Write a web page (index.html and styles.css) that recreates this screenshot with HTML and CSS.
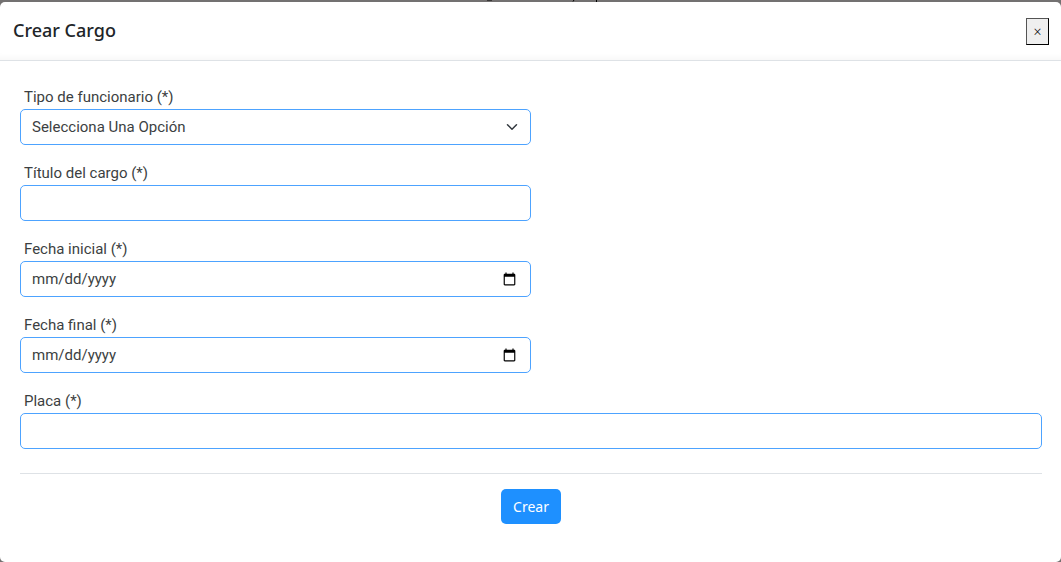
FILE: index.html
```html
<!DOCTYPE html>
<html lang="es">
<head>
  <meta charset="UTF-8" />
  <meta name="viewport" content="width=device-width, initial-scale=1.0"/>
  <title>Crear Cargo</title>
  <link rel="stylesheet" href="styles.css">
</head>
<body>

  <div class="backdrop">
    <svg class="backdrop-marks" width="130" height="2" viewBox="0 0 130 2" aria-hidden="true">
      <path d="M1 0h5M87 1.500l1-1.500M110.500 0v2" stroke="#000" fill="none"/>
    </svg>
  </div>

  <div class="modal" role="dialog" aria-labelledby="modalTitle">
    <div class="modal-header">
      <h5 class="modal-title" id="modalTitle">Crear Cargo</h5>
      <button type="button" class="btn-close" aria-label="Cerrar">×</button>
    </div>

    <form class="modal-body">
      <div class="form-grid">
        <div class="field">
          <label for="tipo">Tipo de funcionario (*)</label>
          <select id="tipo" class="form-control form-select">
            <option>Selecciona Una Opción</option>
          </select>
        </div>
        <div class="field">
          <label for="titulo">Título del cargo (*)</label>
          <input type="text" id="titulo" class="form-control">
        </div>
        <div class="field">
          <label for="fechaInicial">Fecha inicial (*)</label>
          <input type="date" id="fechaInicial" class="form-control">
        </div>
        <div class="field">
          <label for="fechaFinal">Fecha final (*)</label>
          <input type="date" id="fechaFinal" class="form-control">
        </div>
        <div class="field field-wide">
          <label for="placa">Placa (*)</label>
          <input type="text" id="placa" class="form-control">
        </div>
      </div>

      <div class="modal-actions">
        <button type="button" class="btn-primary">Crear</button>
      </div>
    </form>
  </div>

</body>
</html>
```

FILE: styles.css
```css
* {
  box-sizing: border-box;
}
body {
  margin: 0;
  min-height: 100vh;
  display: flex;
  flex-direction: column;
  background: #737171;
  color: #212529;
  font-family: Roboto, sans-serif;
  font-size: 15px;
  line-height: 24px;
}
.backdrop {
  height: 2px;
  display: flex;
  justify-content: center;
}
.backdrop-marks {
  margin-left: 40px;
}
.modal {
  flex: 1;
  background: #fff;
  border-radius: 5px;
}
.modal-header {
  display: flex;
  align-items: flex-start;
  justify-content: space-between;
  padding: 16px 12px 15px 13px;
  border-bottom: 1px solid #dee2e6;
  box-shadow: inset 0 -8px 8px -8px rgba(0, 0, 0, 0.06);
}
.modal-title {
  margin: 0;
  font-family: "Noto Sans", sans-serif;
  font-size: 18px;
  font-weight: 500;
}
.btn-close {
  width: 23px;
  height: 27px;
  padding: 0;
  border: 1px outset #000;
  background: #efefef;
  color: #000;
  font-family: "Noto Sans", sans-serif;
  font-size: 14px;
  font-weight: 300;
}
.modal-body {
  padding: 24px 19px 38px 20px;
}
.form-grid {
  display: grid;
  grid-template-columns: 1fr 1fr;
  row-gap: 16px;
  padding-bottom: 24px;
  border-bottom: 1px solid #dee2e6;
}
.field {
  grid-column: 1;
}
.field-wide {
  grid-column: 1 / -1;
}
.field label {
  display: block;
  padding-left: 4px;
  color: #3c3f42;
}
.form-control {
  display: block;
  width: 100%;
  height: 36px;
  padding: 0 11px;
  border: 1px solid #4da3ff;
  border-radius: 5px;
  background: #fff;
  color: #3c3f42;
  font-family: inherit;
  font-size: 15px;
}
.form-control::-webkit-datetime-edit-fields-wrapper,
.form-control::-webkit-datetime-edit-month-field,
.form-control::-webkit-datetime-edit-day-field,
.form-control::-webkit-datetime-edit-year-field {
  padding: 0;
}
.form-select {
  appearance: none;
  background: #fff url("data:image/svg+xml,%3csvg xmlns='http://www.w3.org/2000/svg' viewBox='0 0 16 16'%3e%3cpath fill='none' stroke='%23343a40' stroke-linecap='round' stroke-linejoin='round' stroke-width='2' d='m2 5 6 6 6-6'/%3e%3c/svg%3e") no-repeat right 12px center / 12px 12px;
}
.modal-actions {
  display: flex;
  justify-content: center;
  padding-top: 15px;
}
.btn-primary {
  height: 35px;
  padding: 0 12px;
  border: none;
  border-radius: 5px;
  background: #1e90ff;
  color: #fff;
  font-family: "Noto Sans", sans-serif;
  font-size: 14px;
  cursor: pointer;
}
```
